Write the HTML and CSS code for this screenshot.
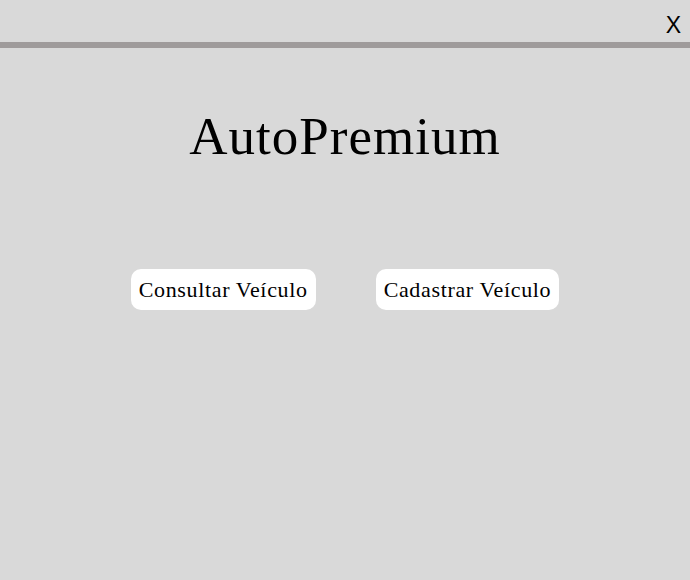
FILE: index.html
```html
<!DOCTYPE html>
<html lang="pt-BR">
<head>
<meta charset="utf-8">
<title>AutoPremium</title>
<link rel="stylesheet" href="styles.css">
</head>
<body>
  <header class="topbar">
    <button class="close" type="button">X</button>
  </header>
  <main class="content">
    <h1 class="title">AutoPremium</h1>
    <div class="actions">
      <button class="btn" type="button">Consultar Veículo</button>
      <button class="btn" type="button">Cadastrar Veículo</button>
    </div>
  </main>
</body>
</html>
```
FILE: styles.css
```css
html, body {
  margin: 0;
  padding: 0;
  background: #d9d9d9;
  height: 100%;
}
body {
  font-family: "Liberation Serif", "DejaVu Serif", serif;
  color: #000;
}
.topbar {
  height: 42px;
  display: flex;
  justify-content: flex-end;
  align-items: center;
  padding-right: 9px;
  border-bottom: 6px solid #9f9b9b;
}
.close {
  background: none;
  border: 0;
  padding: 0;
  margin-top: 8px;
  font-family: "Liberation Sans", Arial, sans-serif;
  font-size: 23px;
  line-height: 1;
  color: #000;
  cursor: pointer;
}
.content {
  display: flex;
  flex-direction: column;
  align-items: center;
  padding-top: 62px;
}
.title {
  margin: 0;
  font-size: 53px;
  font-weight: normal;
  line-height: 1;
  letter-spacing: 1px;
}
.actions {
  display: flex;
  gap: 60px;
  margin-top: 106px;
}
.btn {
  background: #fff;
  border: 0;
  border-radius: 10px;
  padding: 10px 8px 9px;
  font-family: "Liberation Serif", "DejaVu Serif", serif;
  font-size: 22px;
  line-height: 22px;
  letter-spacing: 0.65px;
  color: #000;
  cursor: pointer;
}
```
